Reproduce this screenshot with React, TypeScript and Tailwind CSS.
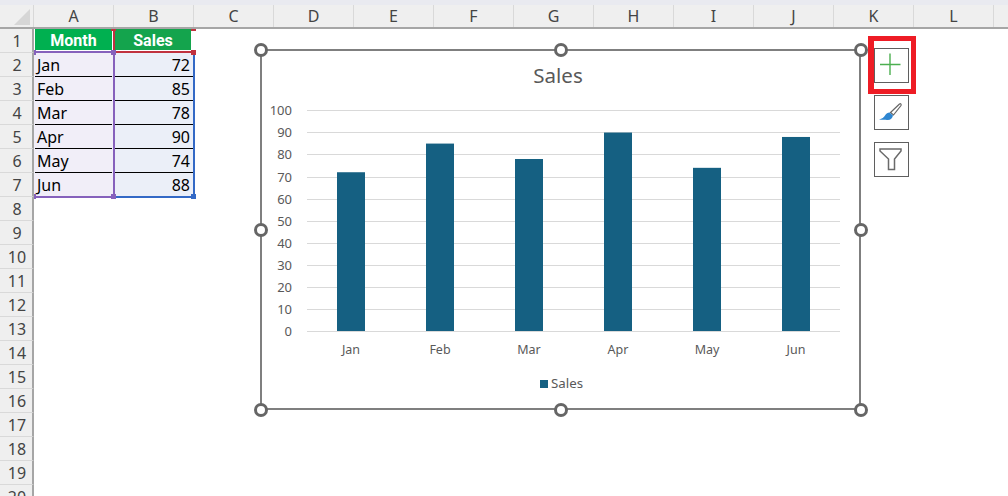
import React from "react";

const columns = ["A", "B", "C", "D", "E", "F", "G", "H", "I", "J", "K", "L", ""];
const rowNumbers = Array.from({ length: 20 }, (_, i) => i + 1);
const data = [
  { month: "Jan", sales: 72 },
  { month: "Feb", sales: 85 },
  { month: "Mar", sales: 78 },
  { month: "Apr", sales: 90 },
  { month: "May", sales: 74 },
  { month: "Jun", sales: 88 },
];
const ticks = [100, 90, 80, 70, 60, 50, 40, 30, 20, 10, 0];

const Handle = () => (
  <span className="block w-[14px] h-[14px] rounded-full border-[3px] border-[#666666] bg-white" />
);

function Plot() {
  const y0 = 280;
  const scale = 2.207;
  return (
    <svg width="597" height="357" viewBox="0 0 597 357" className="block" style={{ fontFamily: '"Noto Sans", sans-serif' }}>
      <text x="296" y="32" textAnchor="middle" fontSize="20.5" fill="#595959">Sales</text>
      {ticks.map((t) => {
        const y = Math.round(y0 - t * scale) + 0.5;
        return (
          <g key={t}>
            <line x1="45" x2="578" y1={y} y2={y} stroke="#D9D9D9" strokeWidth="1" />
            <text x="30" y={y + 4} textAnchor="end" fontSize="13" fill="#595959">{t}</text>
          </g>
        );
      })}
      {data.map((d, i) => {
        const h = d.sales * 2.205;
        return (
          <g key={d.month}>
            <rect x={75 + i * 89} y={y0 - h} width="28" height={h} fill="#156082" />
            <text x={89 + i * 89} y="303" textAnchor="middle" fontSize="12.5" fill="#595959">{d.month}</text>
          </g>
        );
      })}
      <rect x="278" y="329" width="8" height="8" fill="#156082" />
      <text x="289" y="337" fontSize="13.3" fill="#595959">Sales</text>
    </svg>
  );
}

const ChartButton = ({ children }: { children: React.ReactNode }) => (
  <div className="w-[35px] h-[35px] border border-[#5f5f5f] bg-white">
    <svg width="33" height="33" viewBox="0 0 33 33" className="block">{children}</svg>
  </div>
);

function ChartTools() {
  return (
    <div className="absolute left-[874px] top-[48px] flex flex-col gap-3">
      <ChartButton>
        <path d="M5 15.5H25.5M15 4.5V26" stroke="#4CAF50" strokeWidth="1.4" fill="none" />
      </ChartButton>
      <ChartButton>
        <path d="M24.5 8C25.5 7 26.5 8 26 9.5L18.5 19L15.5 16.5Z" fill="#fff" stroke="#666" strokeWidth="1.2" />
        <path d="M14.5 16.5L18 19.5C17.5 22.5 15 24.5 12 24C10 23.5 7 24 4 23.5C7 22.5 9 21.5 10 19.5C11 17.5 13 16.5 14.5 16.5Z" fill="#2E86D1" />
      </ChartButton>
      <ChartButton>
        <path d="M5 6H26V8L19.5 16V26.5H13.5V16L5 8Z" fill="#fff" stroke="#6a6a6a" strokeWidth="1.5" />
      </ChartButton>
      <span className="absolute left-[-6px] top-[-12px] w-[48px] h-[58px] border-[5px] border-l-[6px] border-[#EE1C25]" />
    </div>
  );
}

export default function App() {
  return (
    <div className="relative w-[1008px] h-[496px] overflow-hidden bg-white text-[16px] text-black" style={{ fontFamily: '"Noto Sans", sans-serif' }}>
      <div className="h-[5px] bg-[#E9EAF0]" />
      <div className="flex h-[24px] bg-[#EFEFEF] border-b-2 border-[#A6A6A6] text-[#444444]">
        <div className="w-[34px] shrink-0 border-r border-[#d8d8d8]">
          <svg width="34" height="22" className="block">
            <path d="M30 4V20H14Z" fill="#D6D6D6" />
          </svg>
        </div>
        {columns.map((c, i) => (
          <div key={i} className="w-[80px] shrink-0 flex items-center justify-center border-r border-[#D9D9D9] leading-none">{c}</div>
        ))}
      </div>
      <div>
        {rowNumbers.map((n) => {
          const item = n >= 2 && n <= 7 ? data[n - 2] : null;
          const last = n === 7;
          return (
            <div key={n} className="flex h-[24px]">
              <div className="w-[34px] shrink-0 flex items-center justify-center bg-[#EFEFEF] border-r-2 border-b border-r-[#A6A6A6] border-b-[#D9D9D9] text-[#444444] leading-none pl-[2px]">{n}</div>
              {n === 1 && (
                <>
                  <div className="w-[79px] pb-px pl-px bg-white border-b-2 border-[#8661BC] flex">
                    <div className="flex-1 mr-px pt-[2px] bg-[#00B050] text-white text-[16px] font-bold flex items-center justify-center leading-none" style={{ fontFamily: 'Roboto, sans-serif' }}>Month</div>
                  </div>
                  <div className="w-[78px] pb-px bg-white border-l-2 border-b-2 border-[#C0323F] flex">
                    <div className="flex-1 pt-[2px] bg-[#14A44D] text-white text-[16px] font-bold flex items-center justify-center leading-none" style={{ fontFamily: 'Roboto, sans-serif' }}>Sales</div>
                  </div>
                </>
              )}
              {item && (
                <>
                  <div className={`w-[81px] pl-px flex border-r-2 border-[#8661BC] bg-[#F1EEF8] ${last ? "shadow-[0_1px_0_#8661BC]" : ""}`}>
                    <div className={`flex-1 mr-[1px] border-b flex items-center pl-[2px] leading-none ${last ? "border-[#8661BC]" : "border-black"}`}>{item.month}</div>
                  </div>
                  <div className={`w-[80px] flex border-r-2 border-[#3369C6] bg-[#EBEFF8] ${last ? "shadow-[0_1px_0_#3369C6]" : ""}`}>
                    <div className={`flex-1 border-b flex items-center justify-end pr-[3px] leading-none ${last ? "border-[#3369C6]" : "border-black"}`}>{item.sales}</div>
                  </div>
                </>
              )}
            </div>
          );
        })}
      </div>

      {/* range grips lying over the table corners */}
      <span className="absolute left-[34px] top-[50px] w-[2px] h-[5px] bg-[#8661BC]" />
      <span className="absolute left-[111px] top-[50px] w-[5px] h-[5px] bg-[#8661BC]" />
      <span className="absolute left-[34px] top-[194px] w-[2px] h-[5px] bg-[#8661BC]" />
      <span className="absolute left-[111px] top-[194px] w-[5px] h-[5px] bg-[#8661BC]" />
      <span className="absolute left-[191px] top-[50px] w-[5px] h-[5px] bg-[#C0323F]" />
      <span className="absolute left-[191px] top-[194px] w-[5px] h-[5px] bg-[#3369C6]" />
      <span className="absolute left-[111px] top-[29px] w-[5px] h-[2px] bg-[#C0323F]" />
      <span className="absolute left-[191px] top-[29px] w-[5px] h-[2px] bg-[#C0323F]" />

      {/* chart */}
      <div className="absolute left-[260px] top-[49px] w-[601px] h-[361px] border-2 border-[#7f7f7f] bg-white">
        <Plot />
        <div className="absolute left-[-8px] top-[-8px] w-[614px] h-[374px] flex flex-col justify-between">
          <div className="flex justify-between"><Handle /><Handle /><Handle /></div>
          <div className="flex justify-between"><Handle /><Handle /></div>
          <div className="flex justify-between"><Handle /><Handle /><Handle /></div>
        </div>
      </div>
      <ChartTools />
    </div>
  );
}
